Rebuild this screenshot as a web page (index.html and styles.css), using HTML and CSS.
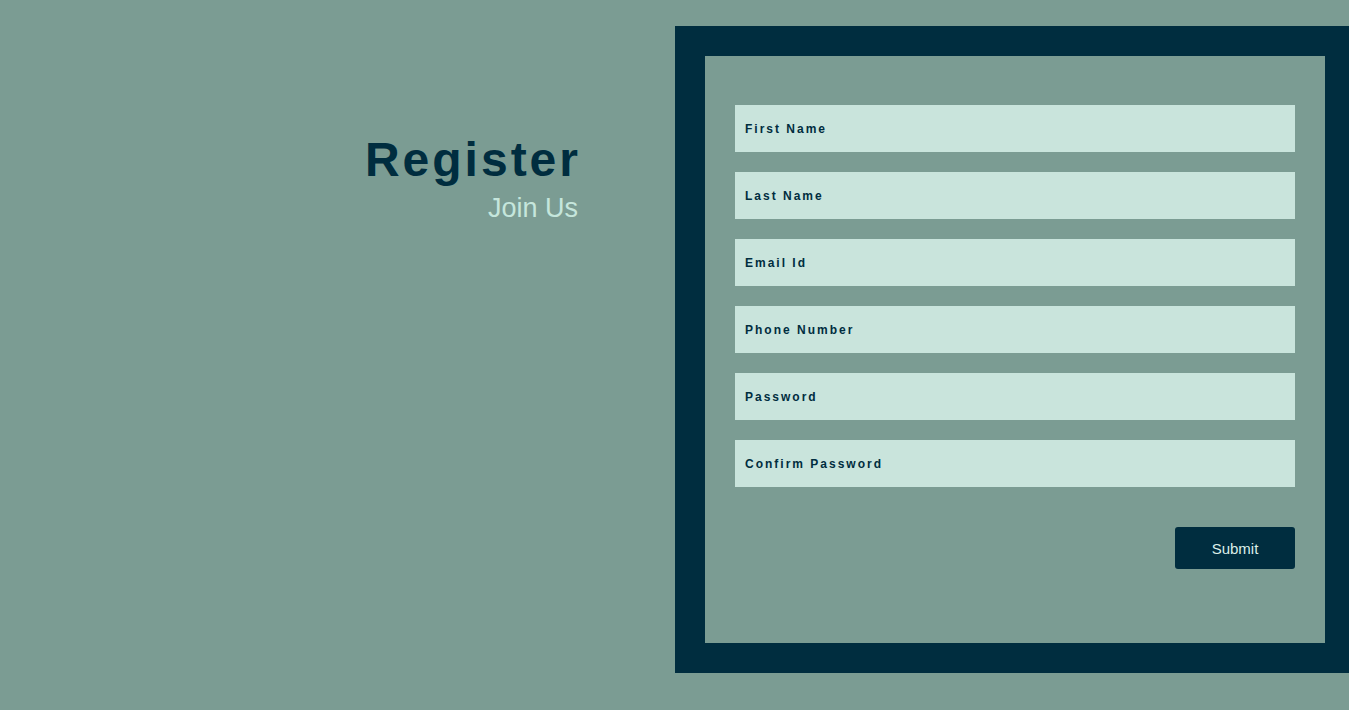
FILE: index.html
```html
<!DOCTYPE html>
<html lang="en">
<head>
    <meta charset="UTF-8">
    <meta name="viewport" content="width=device-width, initial-scale=1.0">
    <title>Register</title>
    <link rel="stylesheet" href="styles.css">
</head>
<body>

    <div class="page">
        <div class="intro">
            <h1 class="title">Register</h1>
            <p class="subtitle">Join Us</p>
        </div>

        <div class="form-side">
            <form class="form-box" onsubmit="return false;">
                <input type="text" class="field" placeholder="First Name">
                <input type="text" class="field" placeholder="Last Name">
                <input type="email" class="field" placeholder="Email Id">
                <input type="tel" class="field" placeholder="Phone Number">
                <input type="password" class="field" placeholder="Password">
                <input type="password" class="field" placeholder="Confirm Password">
                <div class="actions">
                    <button type="submit" class="submit-btn">Submit</button>
                </div>
            </form>
        </div>
    </div>

</body>
</html>
```

FILE: styles.css
```css
:root {
    --bg-color: #7b9c93;
    --dark-color: #002d3f;
    --field-bg: #c9e4dc;
    --light-text: #c5e6dc;
}

* {
    margin: 0;
    padding: 0;
    box-sizing: border-box;
}

body {
    font-family: "Liberation Sans", Arial, sans-serif;
    background-color: var(--bg-color);
    color: var(--dark-color);
    overflow: hidden;
    height: 100vh;
}

.page {
    display: flex;
    width: 100%;
}

.intro {
    flex: 0 0 675px;
    text-align: right;
    padding-top: 136px;
    padding-right: 94px;
}

.title {
    font-size: 48px;
    font-weight: bold;
    letter-spacing: 3px;
    line-height: 1;
    color: var(--dark-color);
}

.subtitle {
    font-size: 27px;
    color: var(--light-text);
    margin-top: 9px;
    padding-right: 3px;
}

.form-side {
    flex: 1;
    padding-top: 26px;
}

.form-box {
    width: 680px;
    border: 30px solid var(--dark-color);
    padding: 49px 30px 74px;
    display: flex;
    flex-direction: column;
    gap: 20px;
}

.field {
    width: 560px;
    height: 47px;
    border: none;
    outline: none;
    padding: 0 10px;
    background-color: var(--field-bg);
    color: var(--dark-color);
    font-family: inherit;
    font-size: 12px;
    font-weight: bold;
    letter-spacing: 2px;
}

.field::placeholder {
    color: var(--dark-color);
    opacity: 1;
}

.actions {
    display: flex;
    justify-content: flex-end;
    margin-top: 20px;
}

.submit-btn {
    width: 120px;
    height: 42px;
    border: none;
    border-radius: 3px;
    background-color: var(--dark-color);
    color: #dcefe9;
    font-family: inherit;
    font-size: 15px;
    cursor: pointer;
}
```
